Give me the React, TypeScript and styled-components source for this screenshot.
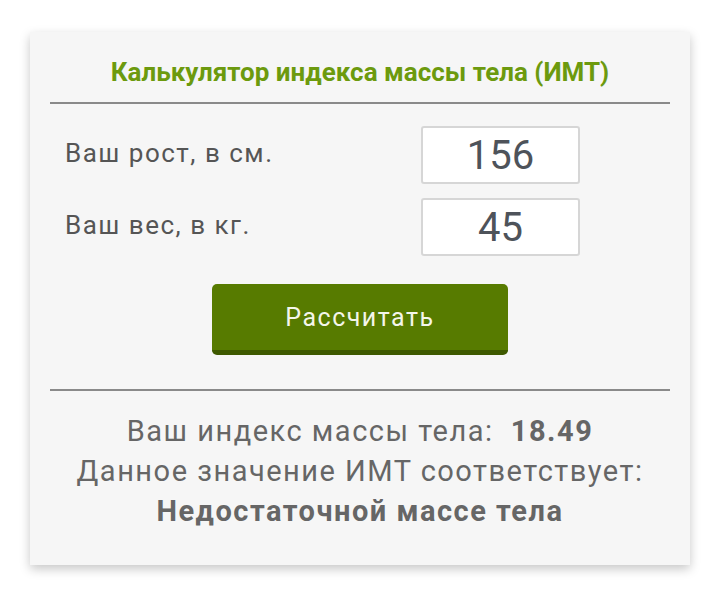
import React, { useState } from 'react';
import styled, { createGlobalStyle } from 'styled-components';

const GlobalStyle = createGlobalStyle`
  html, body {
    margin: 0;
    padding: 0;
    background: #ffffff;
    font-family: Roboto, "Liberation Sans", Arial, sans-serif;
  }
`;

const Page = styled.div`
  padding: 32px 30px 48px 30px;
`;

const Card = styled.div`
  background: #f6f6f6;
  box-shadow: 0 4px 10px rgba(0, 0, 0, 0.22);
  padding: 22px 20px 40px 20px;
  box-sizing: border-box;
  height: 533px;
`;

const Title = styled.h1`
  margin: 0;
  text-align: center;
  font-size: 26px;
  font-weight: 700;
  color: #6c9a0e;
  line-height: 36px;
`;

const Divider = styled.hr<{ $gap: number }>`
  border: 0;
  border-top: 2px solid #8a8a8a;
  margin: ${(p) => p.$gap}px 0 0 0;
`;

const Form = styled.div`
  display: flex;
  flex-direction: column;
  gap: 14px;
  padding: 22px 90px 0 15px;
`;

const Row = styled.div`
  display: flex;
  align-items: center;
  justify-content: space-between;
`;

const Label = styled.label`
  font-size: 26px;
  letter-spacing: 1.5px;
  color: #555555;
  padding-bottom: 4px;
`;

const Field = styled.input`
  width: 159px;
  height: 58px;
  box-sizing: border-box;
  border: 2px solid #d6d6d6;
  border-radius: 3px;
  background: #ffffff;
  text-align: center;
  font-family: Roboto, "Liberation Sans", Arial, sans-serif;
  font-size: 40px;
  color: #4e535a;
  outline: none;
  padding: 0;
`;

const ButtonWrap = styled.div`
  display: flex;
  justify-content: center;
  padding-top: 28px;
`;

const Button = styled.button`
  width: 296px;
  height: 71px;
  border: 0;
  border-bottom: 5px solid #3e5900;
  border-radius: 5px;
  background: #577b00;
  color: #f4f6ea;
  font-family: Roboto, "Liberation Sans", Arial, sans-serif;
  font-size: 25px;
  letter-spacing: 1.5px;
  padding: 0;
  cursor: pointer;
`;

const Result = styled.div`
  padding-top: 20px;
  text-align: center;
  color: #666666;
  font-size: 29px;
  font-weight: 400;
  letter-spacing: 1.5px;
  line-height: 40px;
`;

const Strong = styled.b`
  font-weight: 700;
`;

export default function App() {
  const [height, setHeight] = useState('156');
  const [weight, setWeight] = useState('45');

  return (
    <Page>
      <GlobalStyle />
      <Card>
        <Title>Калькулятор индекса массы тела (ИМТ)</Title>
        <Divider $gap={12} />
        <Form>
          <Row>
            <Label>Ваш рост, в см.</Label>
            <Field value={height} onChange={(e) => setHeight(e.target.value)} />
          </Row>
          <Row>
            <Label>Ваш вес, в кг.</Label>
            <Field value={weight} onChange={(e) => setWeight(e.target.value)} />
          </Row>
        </Form>
        <ButtonWrap>
          <Button>Рассчитать</Button>
        </ButtonWrap>
        <Divider $gap={34} />
        <Result>
          <div>
            Ваш индекс массы тела:&nbsp; <Strong>18.49</Strong>
          </div>
          <div>Данное значение ИМТ соответствует:</div>
          <div>
            <Strong>Недостаточной массе тела</Strong>
          </div>
        </Result>
      </Card>
    </Page>
  );
}
